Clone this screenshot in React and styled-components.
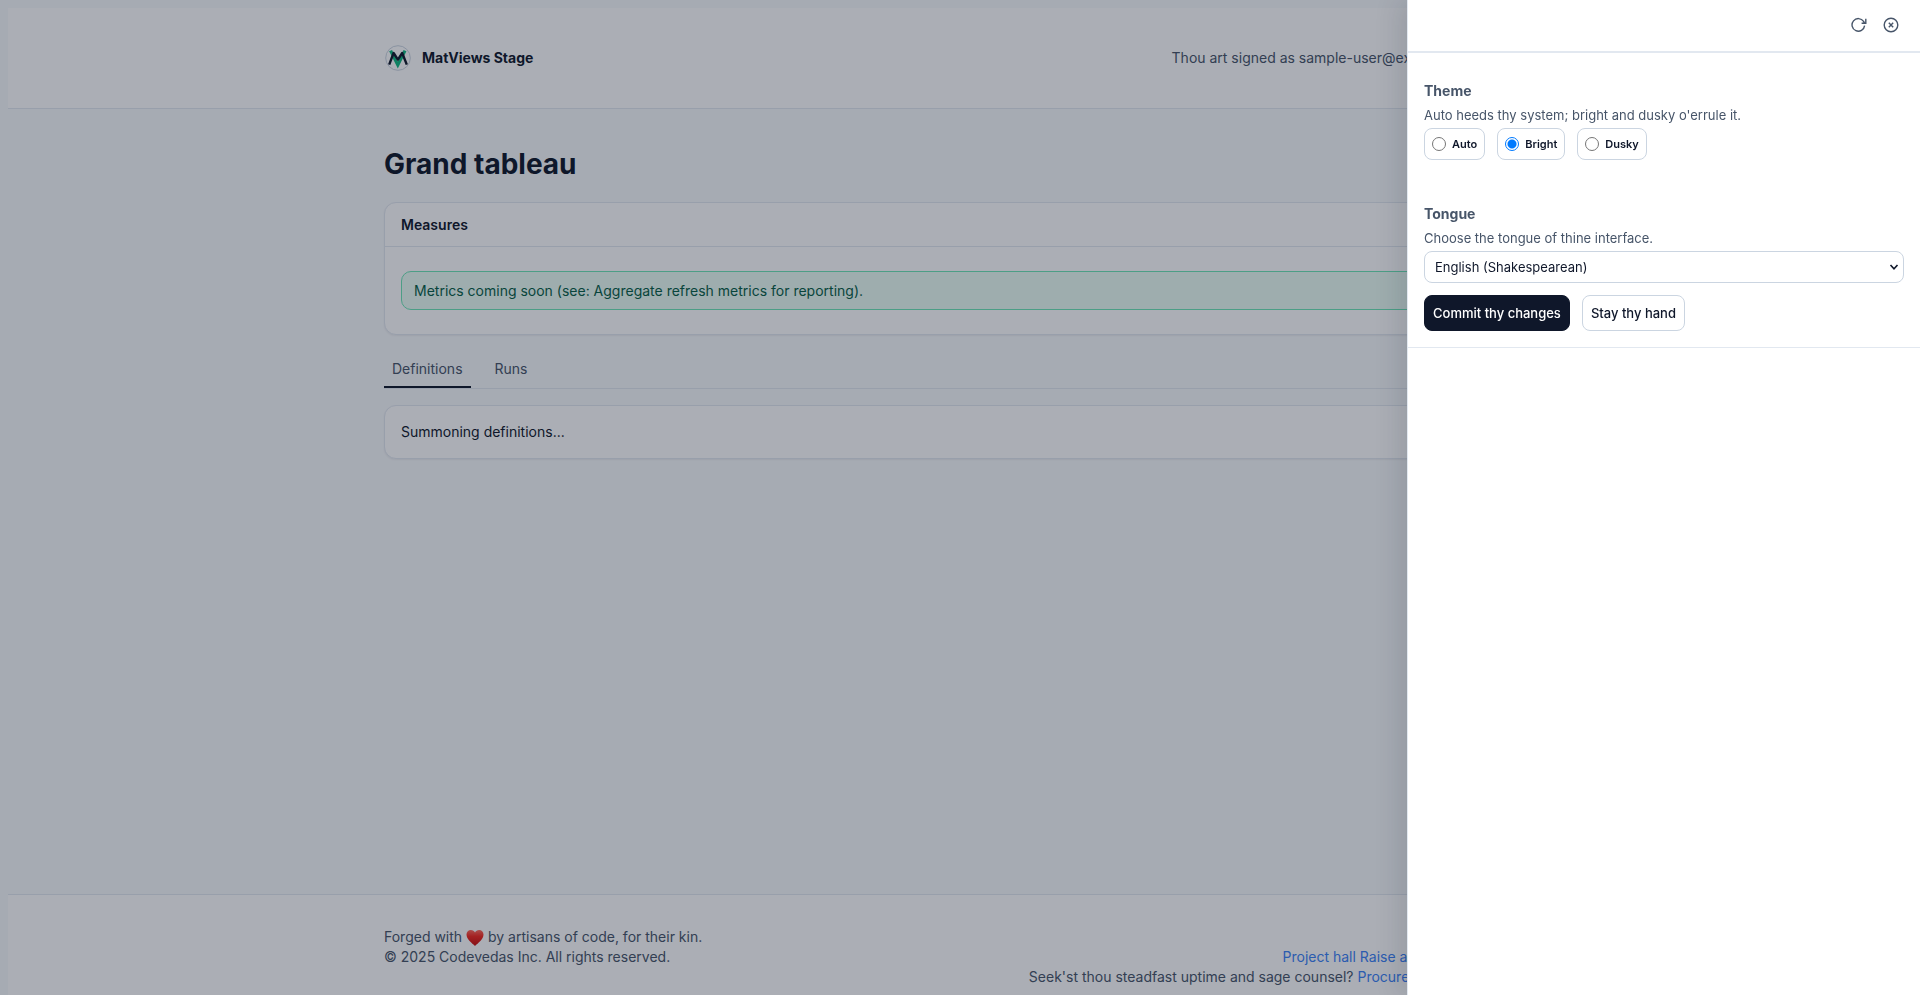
import React, { useState } from "react";
import styled, { createGlobalStyle, css } from "styled-components";

const GlobalStyle = createGlobalStyle`
  body {
    margin: 8px;
    overflow: hidden;
    background: #f8fafc;
    color: #0f172a;
    font-family: Inter, "Liberation Sans", sans-serif;
    font-size: 14px;
    line-height: 20px;
  }
  button, input, select { font-family: inherit; }
`;

const Shell = styled.div`
  display: flex;
  flex-direction: column;
  min-height: 100vh;
`;

const Container = styled.div`
  box-sizing: border-box;
  width: 100%;
  max-width: 1200px;
  margin: 0 auto;
  padding: 0 24px;
`;

const Header = styled.header`
  background: #fff;
  border-bottom: 1px solid #e2e8f0;
`;

const HeaderRow = styled(Container)`
  display: flex;
  align-items: center;
  justify-content: space-between;
  height: 100px;
`;

const Brand = styled.a`
  display: flex;
  align-items: center;
  gap: 10px;
  color: #0f172a;
  font-weight: 700;
  text-decoration: none;
`;

const Account = styled.div`
  display: flex;
  align-items: center;
  gap: 20px;
  color: #475569;
`;

const IconButton = styled.button`
  display: grid;
  place-items: center;
  width: 32px;
  height: 32px;
  padding: 0;
  border: 0;
  background: none;
  color: #475569;
`;

const Main = styled(Container).attrs({ as: "main" })`
  flex: 1;
  padding-top: 35px;
`;

const PageTitle = styled.h1`
  margin: 0 0 18px;
  font-size: 28px;
  line-height: 40px;
  font-weight: 700;
`;

const Card = styled.section`
  border: 1px solid #e2e8f0;
  border-radius: 12px;
  background: #fff;
  box-shadow: 0 1px 2px rgba(15, 23, 42, 0.06);
`;

const CardHeader = styled.h2`
  margin: 0;
  padding: 12px 16px 11px;
  border-bottom: 1px solid #e2e8f0;
  font-size: 14px;
  line-height: 20px;
  font-weight: 600;
`;

const CardBody = styled.div`
  padding: ${(p) => (p.$roomy ? "24px 16px" : "16px")};
`;

const Notice = styled.p`
  margin: 0;
  padding: 8px 12px;
  border: 1px solid #6ee7b7;
  border-radius: 10px;
  background: #ecfdf5;
  color: #065f46;
  line-height: 21px;
`;

const Tabs = styled.div`
  display: flex;
  gap: 16px;
  margin: 16px 0;
  border-bottom: 1px solid #e2e8f0;
`;

const Tab = styled.button`
  padding: 8px 8px 7px;
  border: 0;
  border-bottom: 2px solid ${(p) => (p.$active ? "#0f172a" : "transparent")};
  background: none;
  color: #475569;
  font-size: 14px;
  line-height: 20px;
`;

const Footer = styled.footer`
  border-top: 1px solid #e2e8f0;
  background: #fff;
  color: #475569;
`;

const FooterRow = styled(Container)`
  display: flex;
  justify-content: space-between;
  padding-top: 32px;
  padding-bottom: 16px;
`;

const FooterLine = styled.p`
  margin: 0;
`;

const FooterLinks = styled.div`
  padding-top: 20px;
  text-align: right;
`;

const Link = styled.a`
  color: #3b82f6;
  text-decoration: none;
`;

const Heart = styled.svg`
  width: 18px;
  height: 18px;
  margin: -2px 0;
  vertical-align: middle;
`;

const Backdrop = styled.div`
  position: fixed;
  inset: 0;
  background: rgba(15, 23, 42, 0.35);
`;

const Drawer = styled.aside`
  position: fixed;
  top: 0;
  right: 0;
  bottom: 0;
  width: 512px;
  border-left: 1px solid #e2e8f0;
  background: #fff;
  color: #475569;
  box-shadow: -8px 0 24px rgba(15, 23, 42, 0.12);
`;

const DrawerBar = styled.div`
  display: flex;
  justify-content: flex-end;
  height: 35px;
  padding: 9px 13px 7px;
  border-bottom: 2px solid #e2e8f0;
`;

const Settings = styled.form`
  padding: 28px 16px 16px;
  border-bottom: 1px solid #e2e8f0;
`;

const Group = styled.fieldset`
  margin: 0 0 44px;
  padding: 0;
  border: 0;
`;

const groupTitle = css`
  display: block;
  padding: 0;
  font-size: 14px;
  line-height: 20px;
  font-weight: 700;
`;

const Legend = styled.legend`
  ${groupTitle}
`;

const FieldTitle = styled.label`
  ${groupTitle}
`;

const Hint = styled.p`
  margin: 4px 0 3px;
  font-size: 13px;
  line-height: 20px;
`;

const Row = styled.div`
  display: flex;
  gap: 12px;
`;

const Choice = styled.label`
  display: flex;
  align-items: center;
  gap: 6px;
  padding: 5px 7px;
  border: 1px solid #cbd5e1;
  border-radius: 8px;
  color: #0f172a;
  font-size: 11px;
  line-height: 20px;
  font-weight: 600;
`;

const Radio = styled.input`
  appearance: none;
  box-sizing: border-box;
  width: 14px;
  height: 14px;
  margin: 0;
  border: 1px solid #767676;
  border-radius: 50%;
  background: #fff;
  &:checked {
    border-color: #007aff;
    background: radial-gradient(circle, #007aff 4px, #fff 5px);
  }
`;

const SelectWrap = styled.div`
  display: grid;
  align-items: center;
  margin-bottom: 12px;
  > * { grid-area: 1 / 1; }
  > svg { justify-self: end; margin-right: 5px; pointer-events: none; }
`;

const Select = styled.select`
  appearance: none;
  width: 100%;
  height: 32px;
  padding: 0 10px;
  border: 1px solid #cbd5e1;
  border-radius: 8px;
  background: #fff;
  color: #0f172a;
  font-size: 13px;
`;

const Button = styled.button`
  height: 36px;
  padding: 0 8px;
  border: 1px solid ${(p) => (p.$primary ? "#0f172a" : "#cbd5e1")};
  border-radius: 8px;
  background: ${(p) => (p.$primary ? "#0f172a" : "#fff")};
  color: ${(p) => (p.$primary ? "#fff" : "#0f172a")};
  font-size: 13px;
  font-weight: 500;
`;

const themes = ["Auto", "Bright", "Dusky"];

function Logo() {
  return (
    <svg width="28" height="28" viewBox="0 0 28 28" fill="none" aria-hidden="true">
      <circle cx="14" cy="14" r="12.3" stroke="#cbd5e1" />
      <path d="M6.6 6.6 L13.8 21 L21 6.6" stroke="#10b981" strokeWidth="3.2" />
      <path d="M5.2 20.6 L9.6 9 L13.9 15.6 L18.2 9 L22.8 20.6" stroke="#0f172a" strokeWidth="2.4" strokeLinejoin="round" />
    </svg>
  );
}

export default function App() {
  const [theme, setTheme] = useState("Bright");
  return (
    <>
      <GlobalStyle />
      <Shell>
        <Header>
          <HeaderRow>
            <Brand href="#">
              <Logo />
              MatViews Stage
            </Brand>
            <Account>
              <span>Thou art signed as sample-user@example.com</span>
              <IconButton type="button" aria-label="Settings" />
            </Account>
          </HeaderRow>
        </Header>
        <Main>
          <PageTitle>Grand tableau</PageTitle>
          <Card>
            <CardHeader>Measures</CardHeader>
            <CardBody $roomy>
              <Notice>Metrics coming soon (see: Aggregate refresh metrics for reporting).</Notice>
            </CardBody>
          </Card>
          <Tabs role="tablist">
            <Tab type="button" role="tab" aria-selected="true" $active>Definitions</Tab>
            <Tab type="button" role="tab" aria-selected="false">Runs</Tab>
          </Tabs>
          <Card>
            <CardBody>Summoning definitions...</CardBody>
          </Card>
        </Main>
        <Footer>
          <FooterRow>
            <div>
              <FooterLine>
                Forged with{" "}
                <Heart viewBox="0 0 18 18" role="img" aria-label="love">
                  <defs>
                    <linearGradient id="heart" x1="0" y1="0" x2="0" y2="1">
                      <stop offset="0" stopColor="#ff6a5c" />
                      <stop offset="0.4" stopColor="#f5281e" />
                      <stop offset="1" stopColor="#c40d0d" />
                    </linearGradient>
                  </defs>
                  <path d="M9 17 C6 14 0.5 10.5 0.5 5.5 C0.5 2.8 2.5 1 4.8 1 C6.8 1 8.3 2 9 3.5 C9.7 2 11.2 1 13.2 1 C15.5 1 17.5 2.8 17.5 5.5 C17.5 10.5 12 14 9 17 Z" fill="url(#heart)" />
                </Heart>{" "}
                by artisans of code, for their kin.
              </FooterLine>
              <FooterLine>© 2025 Codevedas Inc. All rights reserved.</FooterLine>
            </div>
            <FooterLinks>
              <FooterLine>
                <Link href="#">Project hall</Link> <Link href="#">Raise a grievance</Link> <Link href="#">Sponsor</Link>
              </FooterLine>
              <FooterLine>
                Seek'st thou steadfast uptime and sage counsel? <Link href="#">Procure enterprise support</Link>
              </FooterLine>
            </FooterLinks>
          </FooterRow>
        </Footer>
      </Shell>
      <Backdrop />
      <Drawer aria-label="Settings">
        <DrawerBar>
          <IconButton type="button" aria-label="Refresh">
            <svg width="16" height="16" viewBox="0 0 16 16" fill="none" stroke="currentColor" strokeWidth="1.4">
              <path d="M13.6 8.6 A6.3 6.3 0 1 1 12.6 4.4 L13.4 5.9 M14.8 1.8 V6.2 H10.6" />
            </svg>
          </IconButton>
          <IconButton type="button" aria-label="Close">
            <svg width="16" height="16" viewBox="0 0 16 16" fill="none" stroke="currentColor" strokeWidth="1.4">
              <circle cx="8" cy="8" r="6.8" />
              <path d="M5.8 5.8 L10.2 10.2 M10.2 5.8 L5.8 10.2" />
            </svg>
          </IconButton>
        </DrawerBar>
        <Settings>
          <Group>
            <Legend>Theme</Legend>
            <Hint>Auto heeds thy system; bright and dusky o'errule it.</Hint>
            <Row>
              {themes.map((name) => (
                <Choice key={name}>
                  <Radio type="radio" name="theme" checked={theme === name} onChange={() => setTheme(name)} />
                  {name}
                </Choice>
              ))}
            </Row>
          </Group>
          <FieldTitle htmlFor="tongue">Tongue</FieldTitle>
          <Hint>Choose the tongue of thine interface.</Hint>
          <SelectWrap>
            <Select id="tongue">
              <option>English (Shakespearean)</option>
            </Select>
            <svg width="10" height="10" viewBox="0 0 10 10" fill="none" stroke="#0f172a" strokeWidth="1.6">
              <path d="M1.5 3 L5 6.8 L8.5 3" />
            </svg>
          </SelectWrap>
          <Row>
            <Button type="button" $primary>Commit thy changes</Button>
            <Button type="button">Stay thy hand</Button>
          </Row>
        </Settings>
      </Drawer>
    </>
  );
}
